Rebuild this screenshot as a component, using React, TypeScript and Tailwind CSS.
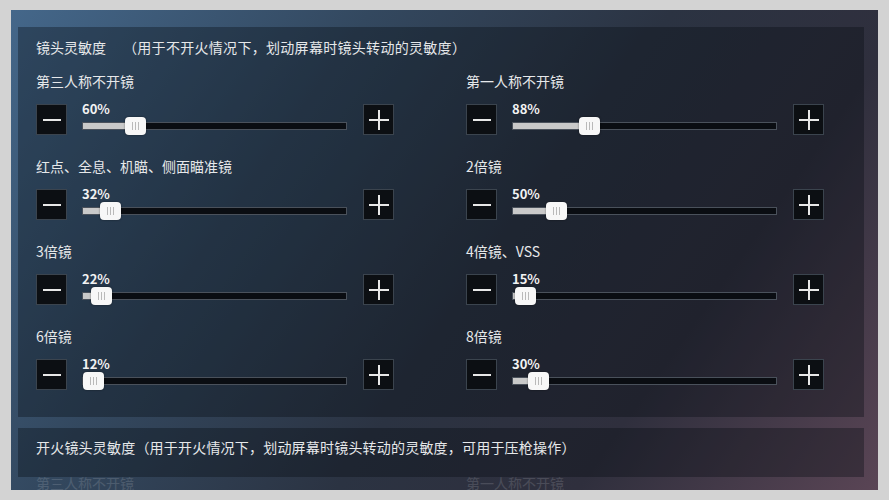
import React from 'react';

type Sens = { label: string; value: number };

const CAMERA: Sens[] = [
  { label: '第三人称不开镜', value: 60 },
  { label: '第一人称不开镜', value: 88 },
  { label: '红点、全息、机瞄、侧面瞄准镜', value: 32 },
  { label: '2倍镜', value: 50 },
  { label: '3倍镜', value: 22 },
  { label: '4倍镜、VSS', value: 15 },
  { label: '6倍镜', value: 12 },
  { label: '8倍镜', value: 30 },
];

const TRACK_W = 265;
const MAX = 300;

const StepButton: React.FC<{ plus?: boolean }> = ({ plus }) => (
  <div className="w-[31px] h-[31px] flex-shrink-0 bg-[#0c0f13] border border-[#3b444e] flex items-center justify-center">
    {plus ? (
      <svg width="20" height="20" viewBox="0 0 20 20">
        <path d="M0 10h20M10 0v20" stroke="#e8e8e8" strokeWidth={2} />
      </svg>
    ) : (
      <span className="block w-[18px] h-[2px] bg-[#e8e8e8]" />
    )}
  </div>
);

const Slider: React.FC<{ value: number }> = ({ value }) => {
  const center = (value / MAX) * TRACK_W;
  const thumbLeft = Math.max(0, center - 11.5);
  return (
    <div className="w-[265px] h-[31px] flex-shrink-0">
      <div className="-mt-[2px] h-[14px] text-[13px] leading-[14px] font-bold text-[#f2f2f2]">{value}%</div>
      <div className="relative mt-[6px] h-[8px] bg-[#0a0d12] border border-[#4a515b]">
        <div className="absolute inset-y-0 left-0 bg-[#c9c9c9]" style={{ width: center }} />
        <div
          className="absolute top-[-6px] h-[18px] w-[21px] rounded-[4px] bg-[#f7f7f7] shadow-[0_0_2px_rgba(0,0,0,0.5)] flex items-center justify-center gap-[2px]"
          style={{ left: thumbLeft }}
        >
          <span className="block w-[1px] h-[8px] bg-[#b9b9b9]" />
          <span className="block w-[1px] h-[8px] bg-[#b9b9b9]" />
          <span className="block w-[1px] h-[8px] bg-[#b9b9b9]" />
        </div>
      </div>
    </div>
  );
};

const SensRow: React.FC<{ item: Sens }> = ({ item }) => (
  <div>
    <div className="h-[20px] leading-[20px] text-[14px] text-[#e6e8ea] whitespace-nowrap">{item.label}</div>
    <div className="mt-[13px] flex items-start">
      <StepButton />
      <div className="ml-[15px]">
        <Slider value={item.value} />
      </div>
      <div className="ml-[16px]">
        <StepButton plus />
      </div>
    </div>
  </div>
);

export default function App() {
  return (
    <div
      className="w-[889px] h-[500px] bg-[#d3d3d3] pt-[10px] pl-[11px] overflow-hidden"
      style={{ fontFamily: '"Noto Sans CJK SC", "Noto Sans", sans-serif' }}
    >
      <div className="w-[867px] h-[480px] overflow-hidden px-[7px] pt-[17px] bg-[linear-gradient(125deg,#44678a_0%,#33485f_30%,#2b3342_55%,#2f2f3d_75%,#5a4555_100%)]">
        {/* camera sensitivity (not firing) */}
        <div className="w-[846px] h-[390px] bg-[#070b12]/35 pl-[18px] pt-[10px]">
          <div className="h-[20px] leading-[20px] text-[14px] text-[#e6e8ea] whitespace-nowrap">
            镜头灵敏度<span className="ml-[17px] tracking-[0.3px]">（用于不开火情况下，划动屏幕时镜头转动的灵敏度）</span>
          </div>
          <div className="mt-[14px] grid grid-cols-[430px_1fr] gap-y-[21px]">
            {CAMERA.map(item => (
              <SensRow key={item.label} item={item} />
            ))}
          </div>
        </div>

        {/* ADS / firing sensitivity */}
        <div className="mt-[11px] w-[846px] h-[49px] bg-[#070b12]/35 pl-[18px] pt-[9px]">
          <div className="h-[20px] leading-[20px] text-[14px] text-[#e6e8ea] whitespace-nowrap tracking-[0.2px]">
            开火镜头灵敏度（用于开火情况下，划动屏幕时镜头转动的灵敏度，可用于压枪操作）
          </div>
        </div>
        <div className="-mt-[4px] pl-[18px] grid grid-cols-[430px_1fr] opacity-15 text-[14px] leading-[20px] text-[#e6e8ea]">
          <div>第三人称不开镜</div>
          <div>第一人称不开镜</div>
        </div>
      </div>
    </div>
  );
}
